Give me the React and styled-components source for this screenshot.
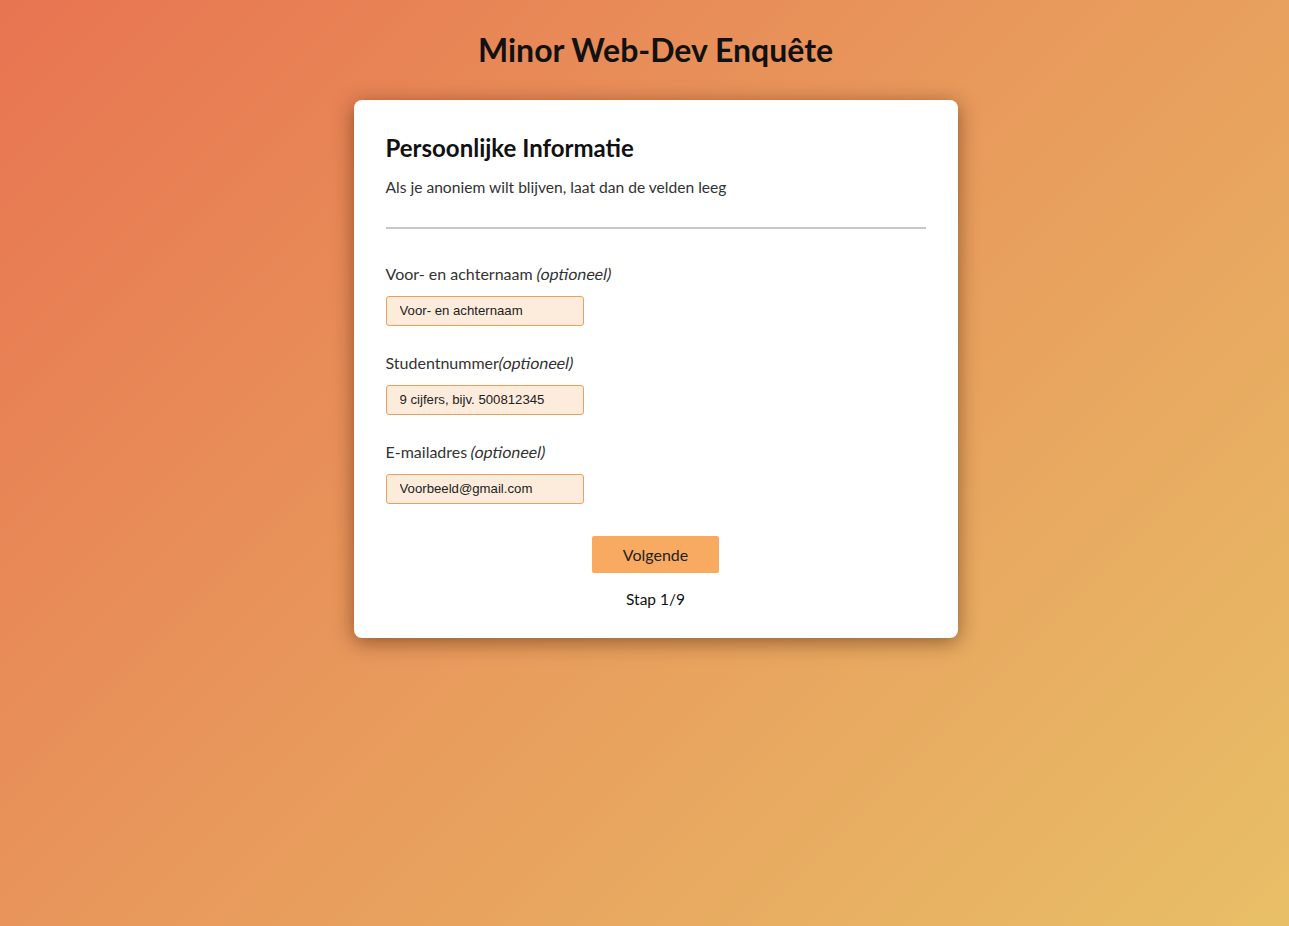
import React from "react";
import styled, { createGlobalStyle } from "styled-components";

const Global = createGlobalStyle`
  html, body { margin: 0; padding: 0; }
  body {
    min-height: 100vh;
    background: linear-gradient(135deg, #e87451 0%, #e8975b 45%, #e8bf67 100%);
    font-family: Lato, "Open Sans", sans-serif;
    color: #111;
  }
`;

const Page = styled.main`
  min-height: 926px;
  display: flex;
  flex-direction: column;
  align-items: center;
  padding: 31px 0 0 22px;
  box-sizing: border-box;
`;

const Title = styled.h1`
  margin: 0 0 31px;
  font-size: 32px;
  line-height: 38px;
  font-weight: 700;
  color: #111;
`;

const Card = styled.form`
  width: 604px;
  box-sizing: border-box;
  background: #fff;
  border-radius: 8px;
  padding: 34px 32px 29px;
  box-shadow: 0 4px 20px rgba(60, 20, 0, 0.5);
  display: flex;
  flex-direction: column;
`;

const Heading = styled.h2`
  margin: 0;
  font-size: 24px;
  line-height: 1.2;
  font-weight: 700;
  color: #111;
`;

const Intro = styled.p`
  margin: 15px 0 0;
  font-size: 15.6px;
  line-height: 18px;
  color: #333;
`;

const Rule = styled.hr`
  margin: 31px 0 0;
  border: 0;
  height: 2px;
  background: #c8c8c8;
`;

const Fields = styled.div`
  display: flex;
  flex-direction: column;
  gap: 28px;
  margin-top: 36px;
`;

const Field = styled.div`
  display: flex;
  flex-direction: column;
  align-items: flex-start;
  gap: 13px;
`;

const Label = styled.label`
  font-size: 16px;
  line-height: 18px;
  color: #333;
`;

const Optional = styled.span`
  display: inline-block;
  transform: skewX(-11deg);
  margin-left: ${(p) => (p.$tight ? "0" : "4px")};
`;

const Input = styled.input`
  width: 198px;
  height: 30px;
  box-sizing: border-box;
  padding: 0 13px;
  border: 1px solid #eea05a;
  border-radius: 3px;
  background: #fdebdc;
  font-family: "Liberation Sans", Arial, sans-serif;
  font-size: 13.2px;
  color: #111;
  outline: none;
  &::placeholder { color: #222; opacity: 1; }
`;

const Footer = styled.div`
  display: flex;
  flex-direction: column;
  align-items: center;
  margin-top: 32px;
  gap: 17px;
`;

const Button = styled.button`
  width: 127px;
  height: 37px;
  border: 0;
  border-radius: 2px;
  background: #f8ab60;
  font-family: Lato, sans-serif;
  font-size: 16px;
  color: #222;
  cursor: pointer;
`;

const Step = styled.span`
  font-size: 15.5px;
  line-height: 19px;
  color: #111;
`;

const fields = [
  { id: "name", label: "Voor- en achternaam", ph: "Voor- en achternaam" },
  { id: "nr", label: "Studentnummer", ph: "9 cijfers, bijv. 500812345", tight: true },
  { id: "mail", label: "E-mailadres", ph: "Voorbeeld@gmail.com" },
];

export default function App() {
  return (
    <>
      <Global />
      <Page>
        <Title>Minor Web-Dev Enquête</Title>
        <Card onSubmit={(e) => e.preventDefault()}>
          <Heading>Persoonlijke Informatie</Heading>
          <Intro>Als je anoniem wilt blijven, laat dan de velden leeg</Intro>
          <Rule />
          <Fields>
            {fields.map((f) => (
              <Field key={f.id}>
                <Label htmlFor={f.id}>
                  {f.label}
                  <Optional $tight={f.tight}>(optioneel)</Optional>
                </Label>
                <Input id={f.id} placeholder={f.ph} />
              </Field>
            ))}
          </Fields>
          <Footer>
            <Button type="submit">Volgende</Button>
            <Step>Stap 1/9</Step>
          </Footer>
        </Card>
      </Page>
    </>
  );
}
